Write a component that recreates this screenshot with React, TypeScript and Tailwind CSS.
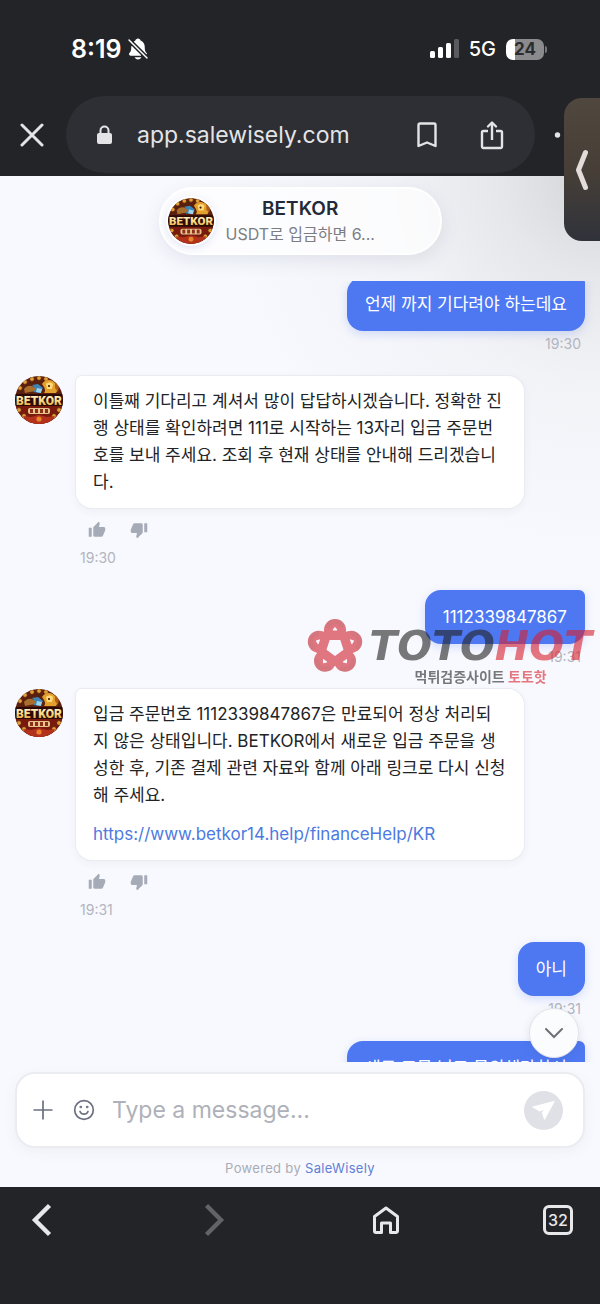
import { useState } from 'react';
import type { ReactNode } from 'react';
import { IoNotificationsOff } from 'react-icons/io5';
import { MdThumbDown, MdThumbUp } from 'react-icons/md';

const LOOPS = [0, 72, 144, 216, 288];

const COINS = [
  [5, 12],
  [10, 6],
  [17, 3],
  [24, 2],
  [31, 3],
  [4, 34],
  [44, 34],
  [9, 40],
  [39, 40],
  [15, 44],
  [33, 44],
];

function BrandAvatar({ className }: { className: string }) {
  return (
    <svg viewBox="0 0 48 48" className={className} role="img" aria-label="BETKOR">
      <defs>
        <linearGradient id="brand-gold" x1="0" y1="0" x2="0" y2="1">
          <stop offset="0" stopColor="#fffbe6" />
          <stop offset="0.5" stopColor="#fbdc88" />
          <stop offset="1" stopColor="#e39b2a" />
        </linearGradient>
        <clipPath id="brand-clip">
          <circle cx="24" cy="24" r="24" />
        </clipPath>
      </defs>
      <g clipPath="url(#brand-clip)">
        <rect width="48" height="48" fill="#5a1f0e" />
        <path d="M0 30h48v18H0z" fill="#7a1a0e" />
        {COINS.map(([cx, cy]) => (
          <circle key={`${cx}-${cy}`} cx={cx} cy={cy} r="2.4" fill="#e0a038" stroke="#5c1d08" strokeWidth="0.8" />
        ))}
        {/* Dragon */}
        <path d="M9 13c3-4 7-4 10-2l6 1-4 3-6 1-5 1z" fill="#a86f2c" />
        <path d="M17 9l6-1 5 4-3 5-7-1 3-3z" fill="#3b86b8" />
        <path d="M22 12l5 1-1 4-5-1z" fill="#9ed3ec" />
        <path d="M27 8c3-5 10-5 13-1 3 3 3 8 1 10H29c2-2 1-5-2-9z" fill="#e2a02c" />
        <path d="M31 8c2-2 5-2 7 0l-1 5h-5z" fill="#ffd97a" />
        <circle cx="34" cy="10" r="1.1" fill="#3a1405" />
        <path d="M40 5l4 5-1 6-3-4z" fill="#b45a18" />
        <rect x="0" y="18" width="48" height="12" fill="#2c0b06" />
        <text
          x="24"
          y="28.5"
          textAnchor="middle"
          fontFamily="Roboto, sans-serif"
          fontWeight="900"
          fontSize="12"
          fill="url(#brand-gold)"
        >
          BETKOR
        </text>
        {/* Slot reels */}
        <rect x="13" y="32" width="22" height="6" rx="2" fill="#e7c48c" />
        {[15, 20, 25, 30].map((x) => (
          <rect key={x} x={x} y="33" width="3" height="4" fill="#8a2f1c" />
        ))}
        <path d="M8 40l8 1 8-2 8 2 8-1-5 8H13z" fill="#b3321b" />
        <circle cx="24" cy="43" r="2.6" fill="#e9842c" />
      </g>
    </svg>
  );
}

function StatusBar() {
  return (
    <div className="flex h-24 items-center justify-between pr-[53px] pl-[71px] text-white">
      <div className="flex items-center gap-1 pt-0.5">
        <span className="text-[25px] leading-8 font-semibold">8:19</span>
        <IoNotificationsOff className="size-6" />
      </div>
      <div className="flex items-center gap-2.5 pt-0.5">
        <svg viewBox="0 0 29 20" className="h-5 w-[29px]" fill="currentColor" aria-hidden="true">
          <rect x="0" y="12" width="5" height="7" rx="1.5" />
          <rect x="8" y="8" width="5" height="11" rx="1.5" />
          <rect x="16" y="4" width="5" height="15" rx="1.5" />
          <rect x="24" y="0" width="5" height="19" rx="1.5" opacity="0.25" />
        </svg>
        <span className="text-[20px] leading-6 font-medium">5G</span>
        <div className="flex items-center gap-px">
          <div className="h-[21px] w-[38px] rounded-[7px] bg-linear-to-r from-white from-24% to-[#8b8b8d] to-24% text-center text-[17px] leading-[21px] font-bold text-[#2b2c30]">
            24
          </div>
          <span className="h-[7px] w-[2px] rounded-r bg-[#77787b]" />
        </div>
      </div>
    </div>
  );
}

function AddressBar() {
  return (
    <div className="flex items-center pb-[3px] pl-5 text-[#e4e4e7]">
      <button aria-label="Close tab">
        <svg viewBox="0 0 24 24" className="size-6" fill="none" stroke="currentColor" strokeWidth="3" strokeLinecap="round">
          <path d="M2 2l20 20M22 2L2 22" />
        </svg>
      </button>
      <div className="ml-[22px] flex h-[77px] min-w-0 flex-1 items-center rounded-full bg-[#2e2f34] pr-[31px] pl-[30px]">
        <svg viewBox="0 0 17 20" className="h-5 w-[17px] shrink-0" aria-hidden="true">
          <path d="M4.500 9V5.500a4 4 0 0 1 8 0V9" fill="none" stroke="currentColor" strokeWidth="2" />
          <rect x="1" y="8" width="15" height="11" rx="2" fill="currentColor" />
        </svg>
        <span className="ml-6 min-w-0 flex-1 truncate text-[23px] leading-8">app.salewisely.com</span>
        <button aria-label="Bookmark">
          <svg viewBox="0 0 20 26" className="h-[26px] w-5" fill="none" stroke="currentColor" strokeWidth="2.4" strokeLinejoin="round">
            <path d="M1.500 3a1.500 1.500 0 0 1 1.500-1.500h14A1.500 1.500 0 0 1 18.500 3v21L10 20.500 1.500 24z" />
          </svg>
        </button>
        <button aria-label="Share" className="ml-[43px]">
          <svg viewBox="0 0 24 30" className="h-[30px] w-6" fill="none" stroke="currentColor" strokeWidth="2.4" strokeLinejoin="round">
            <path d="M8 11H3.500A1.500 1.500 0 0 0 2 12.500v14A1.500 1.500 0 0 0 3.500 28h17a1.500 1.500 0 0 0 1.500-1.500v-14a1.500 1.500 0 0 0-1.500-1.500H16M12 20V3" />
            <path d="M8 6.500l4-4 4 4" strokeLinecap="round" />
          </svg>
        </button>
      </div>
      <button aria-label="More" className="mr-5 ml-[19px]">
        <svg viewBox="0 0 26 6" className="h-1.5 w-[26px]" fill="currentColor">
          <circle cx="3.500" cy="3" r="2.700" />
          <circle cx="13" cy="3" r="2.700" />
          <circle cx="22.500" cy="3" r="2.700" />
        </svg>
      </button>
    </div>
  );
}

function ChatHeader() {
  return (
    <header className="flex h-[105px] shrink-0 justify-center pt-[11px]">
      <div className="flex h-[68px] w-[283px] items-center rounded-full border-2 border-white bg-white/70 pl-[7px] shadow-[0_6px_18px_rgba(80,90,130,0.12)]">
        <BrandAvatar className="size-[46px] shrink-0 rounded-full shadow-[0_0_0_2px_#fff,0_2px_10px_rgba(80,90,180,0.25)]" />
        <div className="ml-3 text-center">
          <h1 className="text-[19px] leading-[26px] font-semibold text-[#232936]">BETKOR</h1>
          <p className="text-[16px] leading-6 whitespace-nowrap text-[#7b7d83]">USDT로 입금하면 6...</p>
        </div>
      </div>
    </header>
  );
}

function UserMessage({ text, time }: { text: string; time: string }) {
  return (
    <div className="flex flex-col items-end">
      <p className="rounded-2xl rounded-tr-md bg-[#4d78f2] px-[18px] py-3.5 text-[17px] leading-[26px] text-white shadow-[0_3px_10px_rgba(77,120,242,0.22)]">
        {text}
      </p>
      <time className="mt-1 mr-1 text-[14px] leading-[18px] text-[#b2b5bd]">{time}</time>
    </div>
  );
}

function BotMessage({ children, time }: { children: ReactNode; time: string }) {
  return (
    <div className="flex items-start gap-[13px] pr-[61px]">
      <BrandAvatar className="size-12 shrink-0" />
      <div className="min-w-0 flex-1">
        <div className="flex flex-col gap-3 rounded-2xl rounded-tl-md bg-white px-[17px] py-3 text-[17px] leading-[27px] text-[#222326] shadow-[0_0_0_1px_#e9ebf1,0_3px_10px_rgba(60,70,110,0.06)]">
          {children}
        </div>
        <div className="mt-[13px] ml-3 flex gap-6 text-[#a6abb8]">
          <button aria-label="Good answer">
            <MdThumbUp className="size-[18px]" />
          </button>
          <button aria-label="Bad answer">
            <MdThumbDown className="size-[18px]" />
          </button>
        </div>
        <time className="mt-2.5 ml-1 block text-[14px] leading-[18px] text-[#b2b5bd]">{time}</time>
      </div>
    </div>
  );
}

function Composer() {
  const [message, setMessage] = useState('');

  return (
    <footer className="flex shrink-0 flex-col px-[15px] pt-2.5">
      <form
        className="flex h-[76px] items-center rounded-[20px] border-2 border-[#ebecf0] bg-white pr-5 pl-4 shadow-[0_4px_14px_rgba(60,70,110,0.05)]"
        onSubmit={(e) => e.preventDefault()}
      >
        <button type="button" aria-label="Attach file" className="text-[#6b7080]">
          <svg viewBox="0 0 20 20" className="size-5" fill="none" stroke="currentColor" strokeWidth="1.700">
            <path d="M10 .5v19M.5 10h19" />
          </svg>
        </button>
        <button type="button" aria-label="Emoji" className="ml-5 text-[#6b7080]">
          <svg viewBox="0 0 22 22" className="size-[22px]" fill="none" stroke="currentColor" strokeWidth="1.700" strokeLinecap="round">
            <circle cx="11" cy="11" r="9.300" />
            <path d="M7 12.500c.8 1.800 2.200 2.700 4 2.700s3.200-.9 4-2.700" />
            <circle cx="7.800" cy="8" r="0.500" />
            <circle cx="14.200" cy="8" r="0.500" />
          </svg>
        </button>
        <input
          type="text"
          aria-label="Message"
          placeholder="Type a message..."
          value={message}
          onChange={(e) => setMessage(e.target.value)}
          className="ml-[17px] min-w-0 flex-1 bg-transparent text-[23px] leading-8 outline-none placeholder:text-[#aeb1b9]"
        />
        <button type="submit" aria-label="Send" className="flex size-[39px] items-center justify-center rounded-full bg-[#dfe1e6]">
          <svg viewBox="0 0 24 24" className="size-6" fill="white" stroke="white" strokeWidth="1.200" strokeLinejoin="round">
            <path d="M22 3.500L1 9l7 4 6-3-3.500 4.500 2 6.500z" />
          </svg>
        </button>
      </form>
      <p className="pt-[11px] pb-[10px] text-center text-[13px] leading-[18px] tracking-wide text-[#a9acb5]">
        Powered by{' '}
        <a href="#salewisely" className="text-[#5f80d6]">
          SaleWisely
        </a>
      </p>
    </footer>
  );
}

function BottomNav() {
  return (
    <nav className="flex h-[117px] shrink-0 items-start justify-between bg-[#232428] px-[27px] pt-[18px] text-[#e8e8ea]">
      <button aria-label="Back" className="flex size-[30px] items-center justify-center">
        <svg viewBox="0 0 30 34" className="h-[34px] w-[30px] shrink-0" fill="none" stroke="currentColor" strokeWidth="4.400">
          <path d="M22.500 2.500L8 17l14.500 14.500" />
        </svg>
      </button>
      <button aria-label="Forward" className="flex size-[30px] items-center justify-center text-[#626367]">
        <svg viewBox="0 0 30 34" className="h-[34px] w-[30px] shrink-0" fill="none" stroke="currentColor" strokeWidth="4.400">
          <path d="M7.500 2.500L22 17 7.500 31.500" />
        </svg>
      </button>
      <button aria-label="Home" className="flex size-[30px] items-center justify-center">
        <svg viewBox="0 0 30 30" className="size-[30px]" fill="none" stroke="currentColor" strokeWidth="3" strokeLinejoin="round">
          <path d="M3.500 11.500L15 3l11.500 8.500V26a1.500 1.500 0 0 1-1.500 1.500h-5.500V18h-9v9.500H5A1.500 1.500 0 0 1 3.500 26z" />
        </svg>
      </button>
      <button aria-label="Tabs" className="size-[30px] rounded-md border-[3px] border-current text-center text-[16px] leading-6 font-medium">
        32
      </button>
    </nav>
  );
}

function Watermark() {
  return (
    <div className="pointer-events-none absolute top-[617px] right-2 flex items-start gap-1 opacity-60" aria-hidden="true">
      <svg viewBox="-30 -30 60 60" className="size-[60px]">
        <mask id="ribbon-holes">
          <rect x="-30" y="-30" width="60" height="60" fill="white" />
          <path d="M0 9L8.500 2.800 5.300-7H-5.300L-8.500 2.800z" fill="black" />
          {LOOPS.map((angle) => (
            <path key={angle} d="M0-19.500L2-17H-2z" fill="black" stroke="black" strokeLinejoin="round" transform={`rotate(${angle})`} />
          ))}
        </mask>
        <g mask="url(#ribbon-holes)">
          {LOOPS.map((angle) => (
            <circle key={angle} cy="-17" r="11" fill="#d1202c" transform={`rotate(${angle})`} />
          ))}
          <circle r="19" fill="#d1202c" />
          {LOOPS.map((angle) => (
            <path
              key={angle}
              d="M-8-19c2-8 13-9 16-1"
              fill="none"
              stroke="#7a1a26"
              strokeWidth="5"
              opacity="0.22"
              transform={`rotate(${angle})`}
            />
          ))}
        </g>
      </svg>
      <div className="flex flex-col items-center">
        <span className="pt-1.5 font-['DejaVu_Sans'] text-[41px] leading-[46px] font-bold text-[#222] italic">
          TOTO<span className="text-[#d8202e]">HOT</span>
        </span>
        <span className="text-[14px] leading-4 font-bold text-[#222]">
          먹튀검증사이트 <span className="text-[#d8202e]">토토핫</span>
        </span>
      </div>
    </div>
  );
}

export default function App() {
  return (
    <div className="relative flex h-screen flex-col overflow-hidden bg-[#f8f9fe] font-[Inter,'Noto_Sans_CJK_KR',sans-serif]">
      <div className="shrink-0 bg-[#232428]">
        <StatusBar />
        <AddressBar />
      </div>

      <main className="relative flex min-h-0 flex-1 flex-col bg-[radial-gradient(circle_at_100%_0%,#d3d4d7_0px,#e6e7eb_100px,#f2f3f7_210px,#f8f9fe_380px)]">
        <ChatHeader />
        <div className="relative flex min-h-0 flex-1 flex-col">
          <div className="min-h-0 flex-1 overflow-hidden px-[15px]">
            <div className="-mt-1 flex flex-col gap-[23px]">
              <UserMessage text="언제 까지 기다려야 하는데요" time="19:30" />
              <BotMessage time="19:30">
                <p>
                  이틀째 기다리고 계셔서 많이 답답하시겠습니다. 정확한 진행 상태를 확인하려면 111로 시작하는 13자리 입금
                  주문번호를 보내 주세요. 조회 후 현재 상태를 안내해 드리겠습니다.
                </p>
              </BotMessage>
              <UserMessage text="1112339847867" time="19:31" />
              <BotMessage time="19:31">
                <p>
                  입금 주문번호 1112339847867은 만료되어 정상 처리되
                  <br />
                  지 않은 상태입니다. BETKOR에서 새로운 입금 주문을 생성한 후, 기존 결제 관련 자료와 함께 아래 링크로
                  다시 신청해 주세요.
                </p>
                <a href="#finance-help" className="text-[#4c7ae0]">
                  https://www.betkor14.help/financeHelp/KR
                </a>
              </BotMessage>
              <UserMessage text="아니" time="19:31" />
              <UserMessage text="새로 주문 넣고 문의해라하서" time="19:31" />
            </div>
          </div>
          <button
            aria-label="Scroll to latest"
            className="absolute right-[21px] bottom-1 flex size-[50px] items-center justify-center rounded-full border border-[#e2e4ea] bg-[#fbfcfe] text-[#6e7076] shadow-[0_2px_8px_rgba(60,70,110,0.12)]"
          >
            <svg viewBox="0 0 20 12" className="h-3 w-5" fill="none" stroke="currentColor" strokeWidth="2" strokeLinecap="round">
              <path d="M2 2l8 8 8-8" />
            </svg>
          </button>
        </div>
        <Composer />
      </main>

      <BottomNav />
      <Watermark />

      {/* Picture-in-picture tab docked to the screen edge */}
      <button
        aria-label="Show video"
        className="absolute top-[98px] right-0 flex h-[143px] w-9 items-center justify-center rounded-l-[18px] bg-linear-to-b from-[#50473f] via-[#473f37] to-[#30323a] text-[#e3dcda]"
      >
        <svg viewBox="0 0 14 42" className="h-[42px] w-3.5" fill="none" stroke="currentColor" strokeWidth="5" strokeLinecap="round" strokeLinejoin="round">
          <path d="M10.500 3.500L3.500 21l7 17.500" />
        </svg>
      </button>
    </div>
  );
}
